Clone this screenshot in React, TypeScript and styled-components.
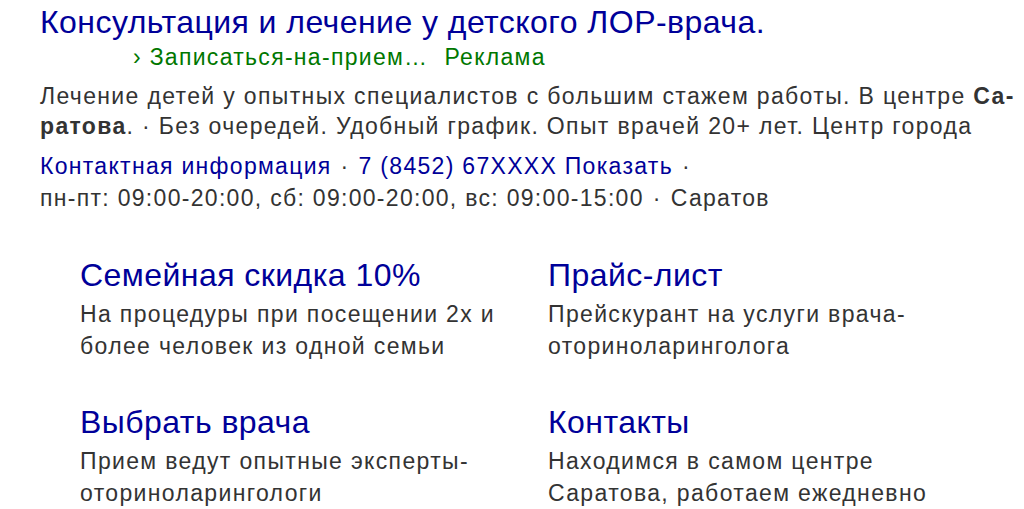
import React from "react";
import styled, { createGlobalStyle } from "styled-components";

const GlobalStyle = createGlobalStyle`
  html, body {
    margin: 0;
    padding: 0;
    background: #fff;
  }
  body {
    font-family: "Liberation Sans", Arial, sans-serif;
  }
`;

const Ad = styled.div`
  padding: 2px 0 0 40px;
  width: 1024px;
  box-sizing: border-box;
`;

const Title = styled.a`
  display: block;
  font-size: 32px;
  line-height: 40px;
  letter-spacing: 0.45px;
  color: #000099;
  text-decoration: none;
  white-space: nowrap;
`;

const UrlRow = styled.div`
  display: flex;
  gap: 16px;
  margin-left: 93px;
  font-size: 23px;
  line-height: 30px;
  letter-spacing: 1.3px;
  color: #007700;
`;

const Description = styled.div`
  margin-top: 9px;
  font-size: 23px;
  line-height: 30px;
  letter-spacing: 1.35px;
  color: #333;
  white-space: nowrap;

  b {
    font-weight: bold;
  }
`;

const Contacts = styled.div`
  margin-top: 9px;
  font-size: 23px;
  line-height: 32px;
  letter-spacing: 1.3px;
  color: #333;
  white-space: nowrap;
`;

const Link = styled.a`
  color: #000099;
  text-decoration: none;
`;

const Dot = styled.span`
  margin: 0 9px;
  color: #333;
`;

const Sitelinks = styled.div`
  display: grid;
  grid-template-columns: 468px 468px;
  row-gap: 40px;
  margin: 41px 0 0 40px;
`;

const Sitelink = styled.div`
  display: flex;
  flex-direction: column;
`;

const SitelinkTitle = styled.a`
  font-size: 32px;
  line-height: 40px;
  letter-spacing: 0.45px;
  color: #000099;
  text-decoration: none;
`;

const SitelinkText = styled.div`
  margin-top: 3px;
  font-size: 23px;
  line-height: 32px;
  letter-spacing: 1.35px;
  color: #333;
  white-space: nowrap;
`;

const sitelinks = [
  { title: "Семейная скидка 10%", lines: ["На процедуры при посещении 2х и", "более человек из одной семьи"] },
  { title: "Прайс-лист", lines: ["Прейскурант на услуги врача-", "оториноларинголога"] },
  { title: "Выбрать врача", lines: ["Прием ведут опытные эксперты-", "оториноларингологи"] },
  { title: "Контакты", lines: ["Находимся в самом центре", "Саратова, работаем ежедневно"] },
];

export default function App() {
  return (
    <>
      <GlobalStyle />
      <Ad>
        <Title href="#">Консультация и лечение у детского ЛОР-врача.</Title>
        <UrlRow>
          <span>› Записаться-на-прием…</span>
          <span>Реклама</span>
        </UrlRow>
        <Description>
          Лечение детей у опытных специалистов с большим стажем работы. В центре <b>Са-</b>
          <br />
          <b>ратова</b>. · Без очередей. Удобный график. Опыт врачей 20+ лет. Центр города
        </Description>
        <Contacts>
          <Link href="#">Контактная информация</Link>
          <Dot>·</Dot>
          <Link href="#">7 (8452) 67XXXX Показать</Link>
          <Dot>·</Dot>
          <br />
          пн-пт: 09:00-20:00, сб: 09:00-20:00, вс: 09:00-15:00
          <Dot>·</Dot>
          Саратов
        </Contacts>
        <Sitelinks>
          {sitelinks.map((s) => (
            <Sitelink key={s.title}>
              <SitelinkTitle href="#">{s.title}</SitelinkTitle>
              <SitelinkText>
                {s.lines[0]}
                <br />
                {s.lines[1]}
              </SitelinkText>
            </Sitelink>
          ))}
        </Sitelinks>
      </Ad>
    </>
  );
}
